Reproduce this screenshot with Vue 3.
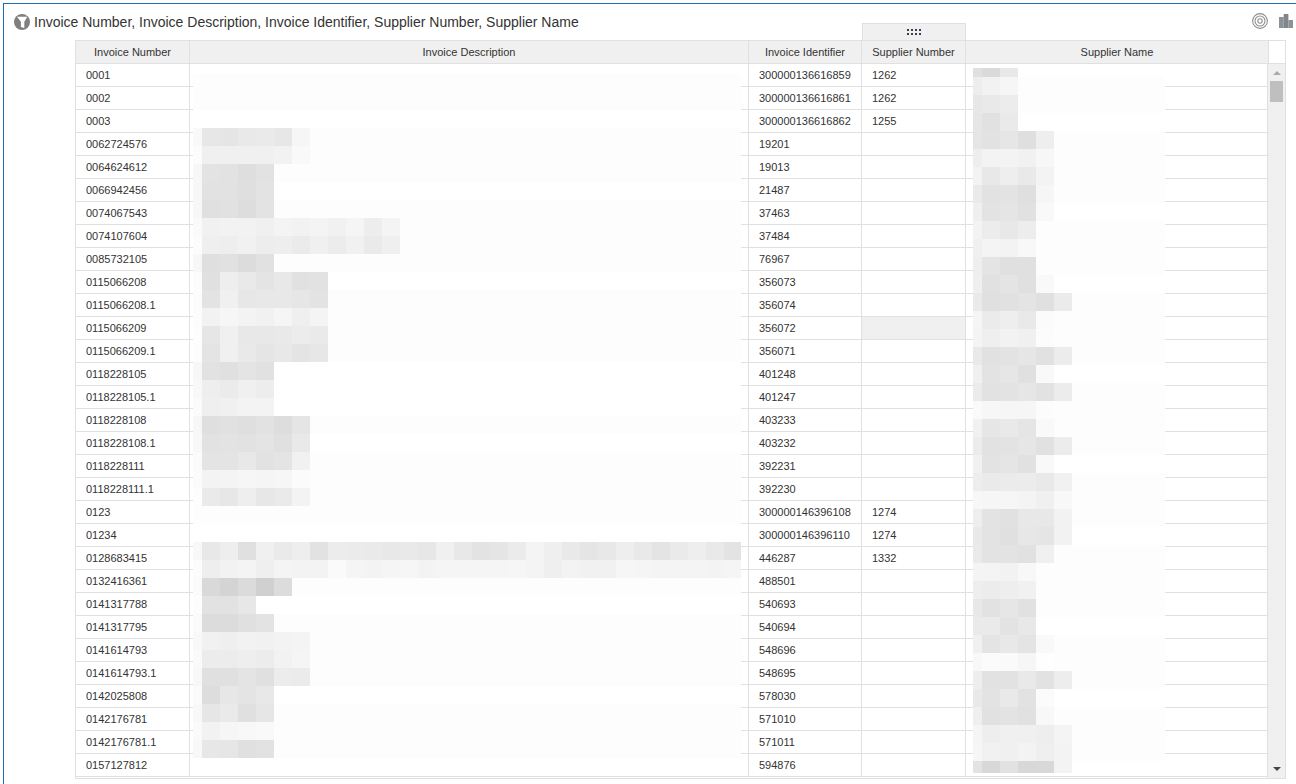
<script setup>
const columns = ['Invoice Number', 'Invoice Description', 'Invoice Identifier', 'Supplier Number', 'Supplier Name']

const rows = [
  ['0001', '300000136616859', '1262'], ['0002', '300000136616861', '1262'], ['0003', '300000136616862', '1255'],
  ['0062724576', '19201', ''], ['0064624612', '19013', ''], ['0066942456', '21487', ''],
  ['0074067543', '37463', ''], ['0074107604', '37484', ''], ['0085732105', '76967', ''],
  ['0115066208', '356073', ''], ['0115066208.1', '356074', ''], ['0115066209', '356072', ''],
  ['0115066209.1', '356071', ''], ['0118228105', '401248', ''], ['0118228105.1', '401247', ''],
  ['0118228108', '403233', ''], ['0118228108.1', '403232', ''], ['0118228111', '392231', ''],
  ['0118228111.1', '392230', ''], ['0123', '300000146396108', '1274'], ['01234', '300000146396110', '1274'],
  ['0128683415', '446287', '1332'], ['0132416361', '488501', ''], ['0141317788', '540693', ''],
  ['0141317795', '540694', ''], ['0141614793', '548696', ''], ['0141614793.1', '548695', ''],
  ['0142025808', '578030', ''], ['0142176781', '571010', ''], ['0142176781.1', '571011', ''],
  ['0157127812', '594876', '']
]

// each line: row background | narrow first tile + 18px tiles, as grey levels
const parse = (lines) => lines.map((line) => {
  const [bg, tiles = ''] = line.split('|')
  const t = tiles.trim() ? tiles.trim().split(' ') : []
  return { bg: `#${bg.repeat(3)}`, tiles: t.map((g) => `#${g.repeat(3)}`) }
})

const descMosaic = parse([
  'fd|', 'fd|', 'ff|',
  'fd|f9 e7 e5 e9 ea e7 f6', 'fd|fc f0 f0 f0 f0 f2 f9', 'fd|f7 e3 e2 de e2', 'ff|f7 e2 e2 df e3',
  'fd|f7 e0 e1 dd e3', 'fd|fa f1 f2 f2 f0 f4 f2 f4 f1 f5 ed f4', 'fd|fc ef ee f1 ed ee eb f0 ec f1 ea ef',
  'fd|f7 df e1 dc e1', 'ff|fc e0 ee e9 e4 e8 e1 e2', 'fd|fc e3 f0 e7 e8 e8 e6 e3', 'fd|fc f2 f6 f3 f1 f5 ef f4',
  'fd|fd e6 f0 e8 e8 e9 ec ea', 'fd|fd e4 f0 e9 e5 e8 e4 e7', 'ff|f7 e2 e0 e4 e1', 'ff|f8 ee eb f0 ed', 'ff|fb ef f0 f3 f3',
  'fd|f7 df e1 df e2 dd e5', 'ff|f8 e2 e3 e2 e4 e0 e9', 'fd|fb e4 e4 e8 e2 e4 f1', 'fd|fb f3 f4 f6 f5 f6 fb',
  'fd|fd ea e7 ee e7 ea f3', 'fd|', 'ff|',
  'fd|f8 e8 ee e0 f0 ea ee e2 ec eb ea e8 e9 e7 f0 e8 e3 e5 eb f4 ef e9 e5 e8 ee e9 e4 ea ee e9 e3',
  'fd|fc ee f2 f4 ef f4 f3 f3 fa f5 f3 f5 f6 f3 f5 f5 f5 f5 f6 f4 ef f3 f1 f1 f6 f5 f4 f4 f4 f3 f5',
  'fd|fb d9 d4 db d0 dc', 'ff|fd e2 e2 e7', 'fd|fb dc dc e0 e3', 'fd|f8 f1 ef f2 f1 f3 f4', 'fd|fa ec ec ee ec f2 f5',
  'fd|f8 e0 e0 e4 e0 ec eb', 'ff|fb dd e7 e4 e8', 'fd|f8 e6 ea e0 e6', 'fd|fa f2 f6 f8 f9', 'fd|f8 e7 e6 e0 e2'
])

const supplierMosaic = parse([
  'fd|ed f2 f6', 'fd|e7 e9 ec', 'ff|e6 e1 ea', 'fd|e5 e2 e6 df ee', 'fd|ee f3 f3 f1 f7', 'fd|f3 e8 ee e9 f3',
  'fd|ea e2 e3 df f6', 'ff|ef e3 e5 e1 f9', 'fd|f3 ec e8 ed', 'fd|f0 f4 f3 f8', 'fd|ee e4 e0 e0', 'ff|ef e1 e4 e0 f9',
  'fd|ea e0 e1 e4 e0 eb', 'fd|f5 eb ee e9 fb', 'fd|f4 ef f2 f0 fc', 'fd|e9 e1 e3 e6 e1 ec', 'ff|f0 e3 e6 e0 f9',
  'fd|eb e2 e3 e6 e2 ec', 'fd|fa f7 f6 f6 fc', 'fd|f1 e6 e9 e5 f9', 'fd|ec e2 e3 e6 e1 ec', 'ff|f1 e3 e5 e1 f9',
  'fd|ed ea eb ec e9 f1', 'fd|f7 f6 f6 f4 f0 f8', 'fd|ee e3 e1 e8 e8 f2', 'ff|e9 e3 e0 e7 e5 f2', 'fd|ea e3 e3 e1 f0',
  'fd|f4 f4 f2 f8', 'fd|ee ec ee f1', 'fd|e8 e2 e6 e1', 'ff|ea ea e3 e8', 'fd|f0 e4 e8 e4 f9', 'fd|f8 fb fa f6 fe',
  'fd|ee e2 e2 e9 e2 ed', 'ff|e9 e3 e9 e2 fb', 'fd|ef e1 e3 e1 f8', 'fd|f5 ee f0 f0 ee f4', 'fd|f6 f1 f0 f3 ef f3'
])
const supplierTop = parse(['ff|e0 da e8'])[0]
const supplierEnd = parse(['ff|e3 d8 e2 d8 d8 f3'])[0]

const dots = [0, 1, 2, 3].flatMap((x) => [0, 1].map((y) => ({ x: x * 4, y: y * 4 })))
</script>

<template>
  <div class="page">
    <section class="panel">
      <header class="head">
        <svg class="funnel" viewBox="0 0 16 16" width="16" height="16">
          <circle cx="8" cy="8" r="8" fill="#7f7f7f" />
          <path d="M3 2.8H13.3L10.3 7.8V14L6.9 13V7.8Z" fill="#fff" />
        </svg>
        <h1 class="title">{{ columns.join(', ') }}</h1>
        <svg class="target" viewBox="0 0 16 16" width="16" height="16" fill="none" stroke="#8f8f8f" stroke-width="1.1">
          <circle cx="8" cy="8" r="7.4" />
          <circle cx="8" cy="8" r="5" />
          <circle cx="8" cy="8" r="2.2" />
        </svg>
        <svg class="bars" viewBox="0 0 14 14" width="14" height="14">
          <rect x="0" y="3" width="4.7" height="11" fill="#8d9296" />
          <rect x="4.7" y="0" width="4.7" height="14" fill="#80868b" />
          <rect x="9.4" y="6" width="4.6" height="8" fill="#8d9296" />
        </svg>
      </header>

      <div class="table">
        <div class="drag-tab">
          <svg viewBox="0 0 14 6" width="14" height="6">
            <rect v-for="d in dots" :key="`${d.x}-${d.y}`" :x="d.x" :y="d.y" width="2" height="2" fill="#3b3b55" />
          </svg>
        </div>

        <div class="header">
          <div v-for="c in columns" :key="c" class="th">{{ c }}</div>
          <div class="th-corner"></div>
        </div>

        <div class="body">
          <div class="rows">
            <div v-for="(r, i) in rows" :key="r[0]" class="row">
              <div class="td">{{ r[0] }}</div>
              <div class="td"></div>
              <div class="td">{{ r[1] }}</div>
              <div class="td" :class="{ selected: i === 11 }">{{ r[2] }}</div>
              <div class="td last"></div>
            </div>
            <div class="mosaic desc">
              <div v-for="(m, i) in descMosaic" :key="i" class="m-row" :style="{ background: m.bg }">
                <i v-for="(t, j) in m.tiles" :key="j" class="tile" :style="{ background: t }"></i>
              </div>
            </div>
            <div class="mosaic supplier">
              <div class="m-row short" :style="{ background: supplierTop.bg }">
                <i v-for="(t, j) in supplierTop.tiles" :key="j" class="tile" :style="{ background: t }"></i>
              </div>
              <div v-for="(m, i) in supplierMosaic" :key="i" class="m-row" :style="{ background: m.bg }">
                <i v-for="(t, j) in m.tiles" :key="j" class="tile" :style="{ background: t }"></i>
              </div>
              <div class="m-row end" :style="{ background: supplierEnd.bg }">
                <i v-for="(t, j) in supplierEnd.tiles" :key="j" class="tile" :style="{ background: t }"></i>
              </div>
            </div>
          </div>
          <div class="scrollbar">
            <span class="arrow up"></span>
            <span class="thumb"></span>
            <span class="arrow down"></span>
          </div>
        </div>
      </div>
    </section>
  </div>
</template>

<style>
html, body { margin: 0; overflow: hidden; background: #fff; }
</style>

<style scoped>
.page {
  width: 1296px;
  height: 784px;
  padding: 3px 0 0 3px;
  box-sizing: border-box;
  overflow: hidden;
  font-family: "Liberation Sans", Arial, sans-serif;
  color: #333;
}
.panel {
  height: 781px;
  border-top: 1px solid #1f6db5;
  border-left: 1px solid #1f6db5;
  box-sizing: border-box;
}
.head {
  height: 36px;
  display: flex;
  align-items: center;
  padding: 0 3px 0 10px;
}
.funnel { flex: none; margin-right: 4px; }
.title {
  margin: 0;
  flex: 1;
  font-size: 14px;
  font-weight: 400;
  white-space: nowrap;
}
.target { flex: none; margin: -2px 11px 0 0; }
.bars { flex: none; margin-top: -2px; }

.table {
  position: relative;
  width: 1211px;
  margin-left: 71px;
  font-size: 11px;
}
.drag-tab {
  position: absolute;
  left: 787px;
  top: -17px;
  width: 104px;
  height: 17px;
  box-sizing: border-box;
  border: 1px solid #e0e0e0;
  border-bottom: 0;
  background: #f0f0f0;
  display: flex;
  align-items: center;
  justify-content: center;
}
.drag-tab svg { display: block; }

.header {
  display: grid;
  grid-template-columns: 114px 559px 113px 104px 303px 16px;
  height: 24px;
  box-sizing: border-box;
  border: 1px solid #e0e0e0;
}
.th {
  background: #f0f0f0;
  border-right: 1px solid #e0e0e0;
  display: flex;
  align-items: center;
  justify-content: center;
  white-space: nowrap;
}
.th-corner { background: #fff; }

.body {
  display: flex;
  height: 715px;
  box-sizing: border-box;
  border-left: 1px solid #e0e0e0;
  border-bottom: 1px solid #e0e0e0;
}
.rows {
  position: relative;
  width: 1191px;
  flex: none;
  overflow: hidden;
}
.row {
  display: grid;
  grid-template-columns: 114px 559px 113px 104px 301px;
  height: 23px;
}
.td {
  box-sizing: border-box;
  border-right: 1px solid #e0e0e0;
  border-bottom: 1px solid #e0e0e0;
  padding-left: 10px;
  line-height: 22px;
  white-space: nowrap;
}
.td.last { border-right: 0; }
.td.selected { background: #f0f0f0; }

.mosaic {
  position: absolute;
  display: flex;
  flex-direction: column;
}
.mosaic.desc { left: 117px; top: 10px; width: 548px; }
.mosaic.supplier { left: 897px; top: 4px; width: 192px; }
.m-row { display: flex; height: 18px; flex: none; overflow: hidden; }
.m-row.short { height: 9px; }
.m-row.end { height: 12px; }
.tile { display: block; width: 18px; height: 100%; flex: none; }
.tile:first-child { width: 9px; }

.scrollbar {
  flex: none;
  width: 19px;
  box-sizing: border-box;
  border-left: 1px solid #e0e0e0;
  border-right: 1px solid #e0e0e0;
  background: #f0f0f0;
  display: flex;
  flex-direction: column;
  align-items: center;
  padding: 7px 0;
}
.arrow {
  width: 0;
  height: 0;
  border-left: 4px solid transparent;
  border-right: 4px solid transparent;
}
.arrow.up { border-bottom: 4px solid #aaa; }
.arrow.down { margin-top: auto; border-top: 4px solid #444; }
.thumb {
  width: 13px;
  height: 21px;
  margin-top: 6px;
  background: #bfbfbf;
}
</style>
